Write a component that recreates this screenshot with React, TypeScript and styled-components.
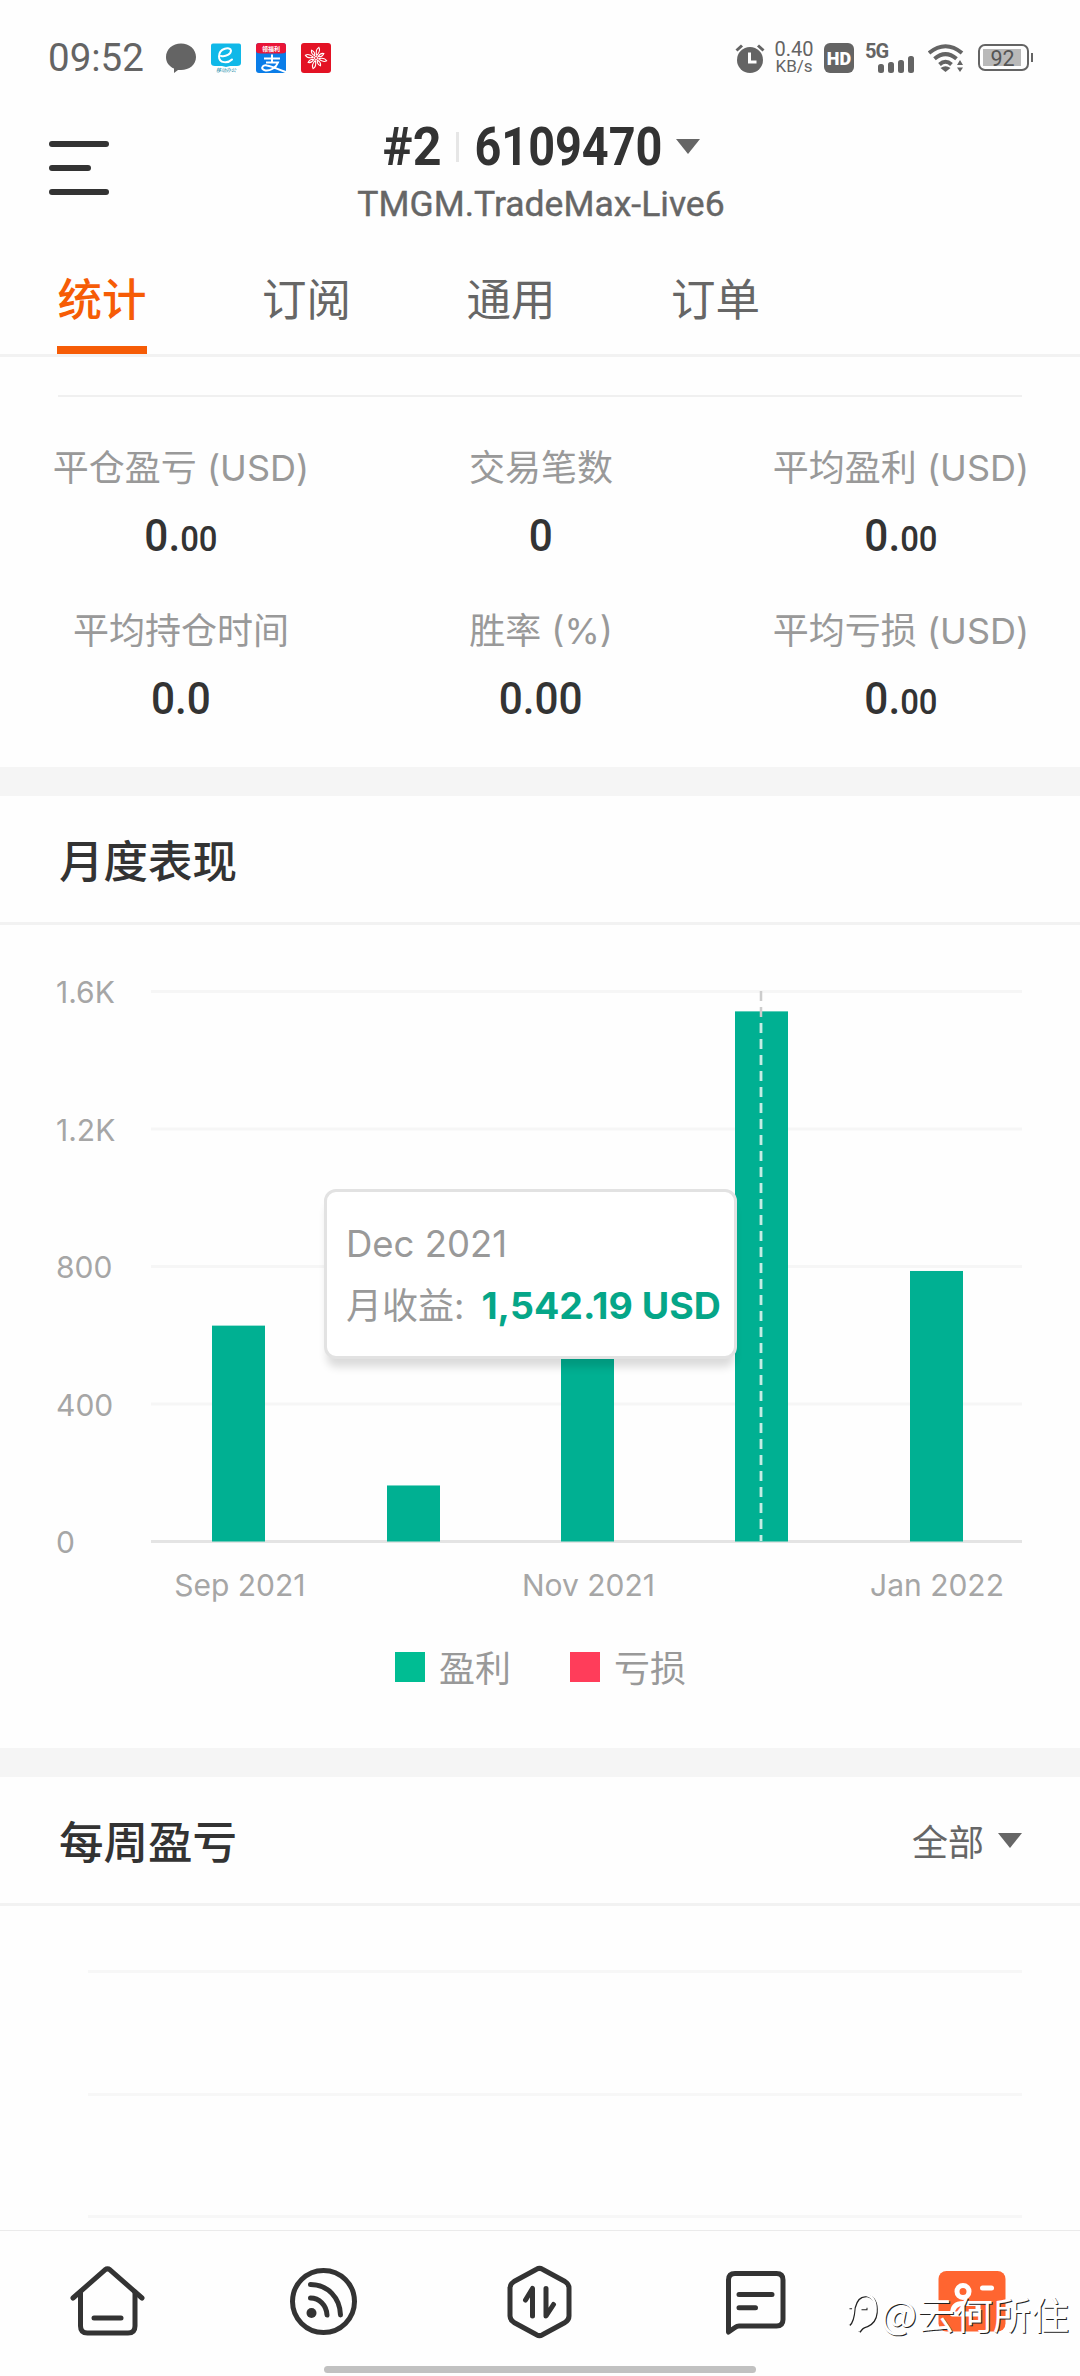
import React from 'react';
import styled, { createGlobalStyle } from 'styled-components';

const GlobalStyle = createGlobalStyle`
  * { box-sizing: border-box; }
  body { margin: 0; background: #fefefe; }
`;

const ui = `Inter, "Noto Sans CJK SC", sans-serif`;
const num = `Roboto, "Noto Sans CJK SC", sans-serif`;

const Screen = styled.div`
  position: relative;
  width: 1080px;
  height: 2376px;
  overflow: hidden;
  display: flex;
  flex-direction: column;
  background: #fefefe;
  color: #333;
  font-family: ${ui};
`;

const StatusBar = styled.div`
  height: 116px;
  padding: 0 51px 0 48px;
  display: flex;
  justify-content: space-between;
  align-items: center;
  color: #646464;
  font-family: ${num};
  svg { display: block; flex: none; }
`;
const StatusLeft = styled.div`
  display: flex;
  align-items: center;
  gap: 15px;
`;
const Clock = styled.span`
  width: 103px;
  font-size: 38.5px;
  line-height: 44px;
  white-space: nowrap;
`;
const StatusRight = styled.div`
  display: flex;
  align-items: center;
`;
const Speed = styled.div`
  display: flex;
  flex-direction: column;
  align-items: center;
  width: 40px;
  margin: 0 10px 0 9px;
  font-size: 20px;
  line-height: 17px;
  small { font-size: 17px; line-height: 17px; }
`;
const HdBadge = styled.span`
  width: 30px;
  height: 30px;
  border-radius: 6px;
  background: #646464;
  color: #fff;
  font-size: 18px;
  font-weight: 900;
  line-height: 31px;
  text-align: center;
`;
const Signal = styled.div`
  display: flex;
  align-items: flex-end;
  gap: 4px;
  position: relative;
  width: 48px;
  height: 30px;
  margin: 0 14px 0 12px;
  padding-left: 12px;
`;
const SignalLabel = styled.span`
  position: absolute;
  left: -1px;
  top: -2px;
  font-size: 20px;
  font-weight: 700;
  line-height: 20px;
  letter-spacing: -1px;
`;
const SignalBar = styled.i<{ $h: number }>`
  width: 6px;
  height: ${p => p.$h}px;
  border-radius: 2.5px;
  background: #646464;
`;
const Battery = styled.div`
  position: relative;
  margin-left: 14px;
  width: 51px;
  height: 27px;
  padding: 2.5px;
  border: 2.5px solid #646464;
  border-radius: 7px;
  &::after {
    content: '';
    position: absolute;
    right: -6px;
    top: 7px;
    width: 2.5px;
    height: 9px;
    background: #646464;
  }
`;
const BatteryFill = styled.div`
  width: 38px;
  height: 17px;
  background: #b9b9b9;
  color: #555;
  font-size: 21.5px;
  line-height: 19px;
  padding-left: 8px;
`;

const Header = styled.header`
  height: 124px;
  padding: 0 49px;
  display: grid;
  grid-template-columns: 60px 1fr 60px;
`;
const MenuButton = styled.div`
  display: flex;
  flex-direction: column;
  gap: 18px;
  padding-top: 25px;
`;
const MenuLine = styled.i<{ $w: number }>`
  width: ${p => p.$w}px;
  height: 6px;
  border-radius: 3px;
  background: #333;
`;
const Account = styled.div`
  display: flex;
  flex-direction: column;
  align-items: center;
`;
const AccountRow = styled.div`
  display: flex;
  align-items: center;
  height: 62px;
  padding-left: 3px;
`;
const Condensed = styled.span<{ $w: number; $scale: number }>`
  width: ${p => p.$w}px;
  display: flex;
  justify-content: center;
  font-family: ${num};
  font-size: 53.5px;
  font-weight: 700;
  line-height: 64px;
  white-space: nowrap;
  span { transform: scaleX(${p => p.$scale}); }
`;
const Separator = styled.i`
  width: 3px;
  height: 30px;
  margin: 0 15px 0 14px;
  background: #e6e6e6;
`;
const Caret = styled.i`
  width: 0;
  border: 12px solid transparent;
  border-top: 15px solid #666;
  border-bottom: 0;
`;
const AccountCaret = styled(Caret)`
  margin-left: 14px;
`;
const Server = styled.div`
  margin-top: 8px;
  padding-left: 2px;
  font-family: ${num};
  font-size: 35.5px;
  font-weight: 400;
  -webkit-text-stroke: 0.4px #666;
  line-height: 36px;
  color: #666;
  white-space: nowrap;
`;

const Tabs = styled.nav`
  display: flex;
  gap: 114.5px;
  height: 118px;
  padding: 0 57px;
  border-bottom: 3px solid #f2f2f2;
`;
const Tab = styled.div<{ $active?: boolean }>`
  width: 90px;
  padding-top: 33px;
  text-align: center;
  font-size: 44.5px;
  line-height: 56px;
  white-space: nowrap;
  font-weight: ${p => (p.$active ? 500 : 400)};
  color: ${p => (p.$active ? '#f65c06' : '#666')};
  border-bottom: 8px solid ${p => (p.$active ? '#f65c06' : 'transparent')};
`;

const Stats = styled.section`
  height: 410px;
  padding-top: 38px;
`;
const Rule = styled.div`
  height: 2px;
  margin: 0 58px;
  background: #f0f0f0;
`;
const StatGrid = styled.div`
  display: grid;
  grid-template-columns: repeat(3, 360px);
  grid-auto-rows: 163px;
  padding: 45px 0 0 1px;
`;
const Stat = styled.div`
  display: flex;
  flex-direction: column;
  align-items: center;
  gap: 12px;
`;
const StatLabel = styled.div`
  font-size: 36px;
  line-height: 52px;
  color: #999;
  white-space: nowrap;
`;
const StatValue = styled.div`
  font-family: ${num};
  font-size: 45px;
  font-weight: 500;
  line-height: 60px;
  color: #333;
  transform: scaleX(0.94);
  small { font-size: 35px; }
`;

const Band = styled.div`
  flex: none;
  height: 29px;
  background: #f5f5f5;
`;
const SectionHead = styled.div`
  flex: none;
  display: flex;
  align-items: center;
  justify-content: space-between;
  height: 129px;
  padding: 5px 58px 0 59px;
  border-bottom: 3px solid #f2f2f2;
`;
const SectionTitle = styled.h2`
  margin: 0;
  font-size: 44.5px;
  font-weight: 500;
  line-height: 60px;
  color: #333;
`;
const Filter = styled.div`
  display: flex;
  align-items: center;
  gap: 14px;
  font-size: 36px;
  line-height: 50px;
  color: #666;
`;
const FilterCaret = styled(Caret)`
  margin-bottom: 4px;
`;

const ChartPanel = styled.section`
  position: relative;
  flex: none;
  height: 823px;
  display: flex;
  flex-direction: column;
  align-items: center;
  svg.chart { display: block; flex: none; }
`;
const Tooltip = styled.div`
  position: absolute;
  left: 324px;
  top: 264px;
  width: 413px;
  height: 170px;
  padding: 32px 0 0 19px;
  border: 3px solid #e2e2e2;
  border-radius: 12px;
  background: #fff;
  box-shadow: 0 11px 9px -3px rgba(0, 0, 0, 0.14);
  color: #999;
  font-size: 36.5px;
  line-height: 40px;
`;
const TooltipRow = styled.div`
  display: flex;
  gap: 17px;
  margin-top: 22px;
  font-size: 36px;
  white-space: nowrap;
  b { color: #05a688; font-weight: 700; font-size: 37.5px; letter-spacing: 0.05px; }
`;
const Legend = styled.div`
  display: flex;
  gap: 59px;
  height: 50px;
  padding-left: 1px;
`;
const LegendItem = styled.div<{ $c: string }>`
  display: flex;
  align-items: center;
  gap: 14px;
  font-size: 36px;
  line-height: 50px;
  color: #999;
  span { padding-top: 3px; }
  &::before {
    content: '';
    width: 30px;
    height: 30px;
    background: ${p => p.$c};
  }
`;
const Weekly = styled.section`
  flex: none;
  height: 324px;
  padding: 64px 58px 0 88px;
  display: flex;
  flex-direction: column;
  gap: 119.5px;
`;
const WeeklyLine = styled.i`
  height: 3px;
  flex: none;
  background: #f7f7f7;
`;

const BottomNav = styled.nav`
  position: relative;
  flex: none;
  height: 146px;
  padding-top: 31px;
  border-top: 1px solid #ebebeb;
  display: grid;
  grid-template-columns: repeat(5, 216px);
  justify-items: center;
  svg { display: block; }
`;
const HomeIndicator = styled.i`
  position: absolute;
  left: 324px;
  bottom: 3px;
  width: 432px;
  height: 7px;
  border-radius: 4px;
  background: #c1c1c1;
`;
const Watermark = styled.div`
  position: absolute;
  left: 844px;
  bottom: 38px;
  display: flex;
  align-items: center;
  color: #fff;
  font-family: "Noto Sans CJK SC", sans-serif;
  font-size: 38px;
  font-weight: 400;
  line-height: 50px;
  text-shadow: 1px 1px 0 #222;
  white-space: nowrap;
`;

const bars = [
  { label: 'Sep 2021', value: 628 },
  { label: '', value: 163 },
  { label: 'Nov 2021', value: 560 },
  { label: '', value: 1542.19 },
  { label: 'Jan 2022', value: 787 },
];
const ticks = [
  { label: '1.6K', value: 1600 },
  { label: '1.2K', value: 1200 },
  { label: '800', value: 800 },
  { label: '400', value: 400 },
  { label: '0', value: 0 },
];
const BASE = 616.5;
const yOf = (v: number) => BASE - (v * 550) / 1600;

const AxisText = styled.text`
  font-family: ${ui};
  font-size: 30px;
  fill: #a6a6a6;
`;

function MonthlyChart() {
  return (
    <svg className="chart" width="1080" height="717" viewBox="0 0 1080 717">
      {ticks.map(t => (
        <g key={t.label}>
          <rect x="151" y={yOf(t.value) - 1.5} width="871" height="3" fill={t.value ? '#f6f6f6' : '#e4e4e4'} />
          <AxisText x="56" y={yOf(t.value) + 11.5}>{t.label}</AxisText>
        </g>
      ))}
      {bars.map((b, i) => {
        const cx = 238.3 + i * 174.3;
        return (
          <g key={i}>
            <rect x={Math.round(cx - 26)} y={yOf(b.value)} width="53" height={BASE - yOf(b.value)} fill="#00b092" />
            {b.label && <AxisText x={cx + 1.5} y="671" textAnchor="middle">{b.label}</AxisText>}
          </g>
        );
      })}
      <path d="M761 66V616" stroke="#ccc" strokeWidth="2.5" strokeDasharray="10 6" />
      <path d="M761 98V616" stroke="#c4ede4" strokeWidth="2.5" strokeDasharray="10 6" />
    </svg>
  );
}

const line = { fill: 'none', stroke: '#333', strokeWidth: 5, strokeLinecap: 'round' as const, strokeLinejoin: 'round' as const };

const HomeIcon = () => (
  <svg width="80" height="80" viewBox="0 0 80 80" {...line}>
    <path d="M5 36 L37 7.8 Q39.5 6 42 7.8 L74 36" />
    <path d="M12.5 30V64q0 7 7 7H60q7 0 7-7V30" />
    <path d="M26 56H53" />
  </svg>
);
const FeedIcon = () => (
  <svg width="80" height="80" viewBox="0 0 80 80" {...line}>
    <circle cx="39.5" cy="39.5" r="31" />
    <path d="M26.5 22.5C44 22.5 56 36 56.5 53" />
    <path d="M26.5 36C35 36 42.5 43 43 53" />
    <circle cx="27.5" cy="51" r="5" fill="#333" stroke="none" />
  </svg>
);
const TradeIcon = () => (
  <svg width="80" height="80" viewBox="0 0 80 80" {...line}>
    <path d="M36.6 7.2Q39.5 5.5 42.4 7.2L65 19.5Q69 22 69 26V54Q69 58 65 60.5L42.4 72.8Q39.5 74.5 36.6 72.8L14 60.5Q10 58 10 54V26Q10 22 14 19.5Z" />
    <path d="M25.500 38L32.500 26.500V54M46 26.500V54L53.500 42.500" />
  </svg>
);
const ChatIcon = () => (
  <svg width="80" height="80" viewBox="0 0 80 80" {...line}>
    <path d="M12.5 70V18q0-6.500 6.500-6.500H60.500q6.500 0 6.500 6.500V57.500q0 6.500-6.500 6.500H23q-2 0-4 1.500Z" />
    <path d="M23 32.500H56M23 45.800H39.500" />
  </svg>
);
const ProfileIcon = () => (
  <svg width="80" height="80" viewBox="0 0 80 80">
    <rect x="6.500" y="9" width="67" height="60.500" rx="8" fill="#ff6530" />
    <circle cx="31" cy="29.500" r="6" fill="none" stroke="#fff" strokeWidth="5" />
    <path d="M20.500 52C20.500 44 25 41.500 31 41.500H46V52Z" fill="none" stroke="#fff" strokeWidth="5" strokeLinejoin="round" />
    <path d="M50.500 26H59.500" stroke="#fff" strokeWidth="5" strokeLinecap="round" />
  </svg>
);

const WATERMARK_LOGO = 'M4 34Q8 31 9 17H4M9 17Q12 4 22 5Q32 7 31 22Q30 32 22 35Q17 36 14 41M16 18H22';

export default function App() {
  return (
    <Screen>
      <GlobalStyle />
      <StatusBar>
        <StatusLeft>
          <Clock>09:52</Clock>
          <svg width="30" height="30" viewBox="0 0 30 30">
            <path d="M15 .5C23.300 .5 30 6.300 30 14S23.300 27 15 27c-1 0-2-.1-3 0L8 30V25.500C3 23.500 0 19.200 0 14 0 6.300 6.700.5 15 .5Z" fill="#646464" />
          </svg>
          <svg width="30" height="30" viewBox="0 0 30 30">
            <path d="M2 .5H28q2 0 2 2V20q0 3-4 3H19l-4 1-4-1H4q-4 0-4-3V2.500q0-2 2-2Z" fill="#10b8e8" />
            <path d="M10 13C15 14 20 11 20 7.500 19.500 3.500 8 5 8 13.500c0 7 9 7 13 3" fill="none" stroke="#fff" strokeWidth="2" strokeLinecap="round" />
            <text x="15" y="28.500" textAnchor="middle" fontSize="5" fontFamily="Noto Sans CJK SC" fontStyle="italic" fill="#138aa8">移动办公</text>
          </svg>
          <svg width="30" height="30" viewBox="0 0 30 30">
            <rect width="30" height="30" rx="3" fill="#0a7de8" />
            <path d="M3 0H27q3 0 3 3V8Q30 10.500 25 10.500H5Q0 10.500 0 8V3Q0 0 3 0Z" fill="#e91437" />
            <text x="15" y="8" textAnchor="middle" fontSize="6" fontWeight="700" fontFamily="Noto Sans CJK SC" fill="#fff">领福利</text>
            <path d="M8 15.500H24M16 11.500V19M10 19.500H22C20 25 14 28 9.500 27.500 4 26.500 6 21.500 11 22.500 17 23.500 23 27 30 29" fill="none" stroke="#fff" strokeWidth="2" />
          </svg>
          <svg width="30" height="30" viewBox="0 0 30 30">
            <rect width="30" height="30" rx="3" fill="#e31224" />
            <g fill="none" stroke="#fff" strokeWidth="1.100">
              {[0, 45, 90, 135, 180, 225, 270, 315].map((a, i) => (
                <path key={a} d={i % 2 ? 'M15 12.500Q12.500 9 15 6Q17.500 9 15 12.500' : 'M15 12.500Q12 7 15 4Q18 7 15 12.500'} transform={`rotate(${a + 15} 15 15)`} />
              ))}
              <circle cx="15" cy="15" r="1.500" />
            </g>
          </svg>
        </StatusLeft>
        <StatusRight>
          <svg width="30" height="30" viewBox="0 0 30 30">
            <circle cx="15" cy="17" r="13" fill="#646464" />
            <path d="M1.500 7.500L7 2.500M28.500 7.500L23 2.500" stroke="#646464" strokeWidth="3" />
            <path d="M14.500 9.500V19H21.500" fill="none" stroke="#fff" strokeWidth="3" />
          </svg>
          <Speed>0.40<small>KB/s</small></Speed>
          <HdBadge>HD</HdBadge>
          <Signal>
            <SignalLabel>5G</SignalLabel>
            <SignalBar $h={9} />
            <SignalBar $h={11} />
            <SignalBar $h={13} />
            <SignalBar $h={17} />
          </Signal>
          <svg width="36" height="30" viewBox="0 0 36 30" fill="none" stroke="#646464" strokeWidth="4">
            <path d="M1 10Q17.500-3.500 34 10M6.500 15.800Q17.500 6.500 28.500 15.800M11.500 21.500Q17.500 16 23.500 21.500" />
            <path d="M17.500 29L12.500 25Q17.500 21.500 22.500 25Z" fill="#646464" stroke="none" />
            <path d="M32 17L35 22H29ZM32 29L35 24.500H29Z" fill="#646464" stroke="none" />
          </svg>
          <Battery><BatteryFill>92</BatteryFill></Battery>
        </StatusRight>
      </StatusBar>

      <Header>
        <MenuButton>
          <MenuLine $w={60} />
          <MenuLine $w={42} />
          <MenuLine $w={60} />
        </MenuButton>
        <Account>
          <AccountRow>
            <Condensed $w={59} $scale={0.94}><span>#2</span></Condensed>
            <Separator />
            <Condensed $w={188} $scale={0.875}><span>6109470</span></Condensed>
            <AccountCaret />
          </AccountRow>
          <Server>TMGM.TradeMax-Live6</Server>
        </Account>
      </Header>

      <Tabs>
        <Tab $active>统计</Tab>
        <Tab>订阅</Tab>
        <Tab>通用</Tab>
        <Tab>订单</Tab>
      </Tabs>

      <Stats>
        <Rule />
        <StatGrid>
          <Stat><StatLabel>平仓盈亏 (USD)</StatLabel><StatValue>0.<small>00</small></StatValue></Stat>
          <Stat><StatLabel>交易笔数</StatLabel><StatValue>0</StatValue></Stat>
          <Stat><StatLabel>平均盈利 (USD)</StatLabel><StatValue>0.<small>00</small></StatValue></Stat>
          <Stat><StatLabel>平均持仓时间</StatLabel><StatValue>0.0</StatValue></Stat>
          <Stat><StatLabel>胜率 (%)</StatLabel><StatValue>0.00</StatValue></Stat>
          <Stat><StatLabel>平均亏损 (USD)</StatLabel><StatValue>0.<small>00</small></StatValue></Stat>
        </StatGrid>
      </Stats>

      <Band />
      <SectionHead>
        <SectionTitle>月度表现</SectionTitle>
      </SectionHead>
      <ChartPanel>
        <MonthlyChart />
        <Legend>
          <LegendItem $c="#00bd93"><span>盈利</span></LegendItem>
          <LegendItem $c="#ff3d5a"><span>亏损</span></LegendItem>
        </Legend>
        <Tooltip>
          Dec 2021
          <TooltipRow><span>月收益:</span><b>1,542.19 USD</b></TooltipRow>
        </Tooltip>
      </ChartPanel>

      <Band />
      <SectionHead>
        <SectionTitle>每周盈亏</SectionTitle>
        <Filter>全部<FilterCaret /></Filter>
      </SectionHead>
      <Weekly>
        <WeeklyLine />
        <WeeklyLine />
        <WeeklyLine />
      </Weekly>

      <BottomNav>
        <HomeIcon />
        <FeedIcon />
        <TradeIcon />
        <ChatIcon />
        <ProfileIcon />
        <HomeIndicator />
      </BottomNav>
      <Watermark>
        <svg width="37" height="46" viewBox="0 0 36 46" fill="none">
          <path d={WATERMARK_LOGO} stroke="#222" strokeWidth="2.500" transform="translate(1 1)" />
          <path d={WATERMARK_LOGO} stroke="#fff" strokeWidth="2.500" />
        </svg>
        <span>@云何所住</span>
      </Watermark>
    </Screen>
  );
}
